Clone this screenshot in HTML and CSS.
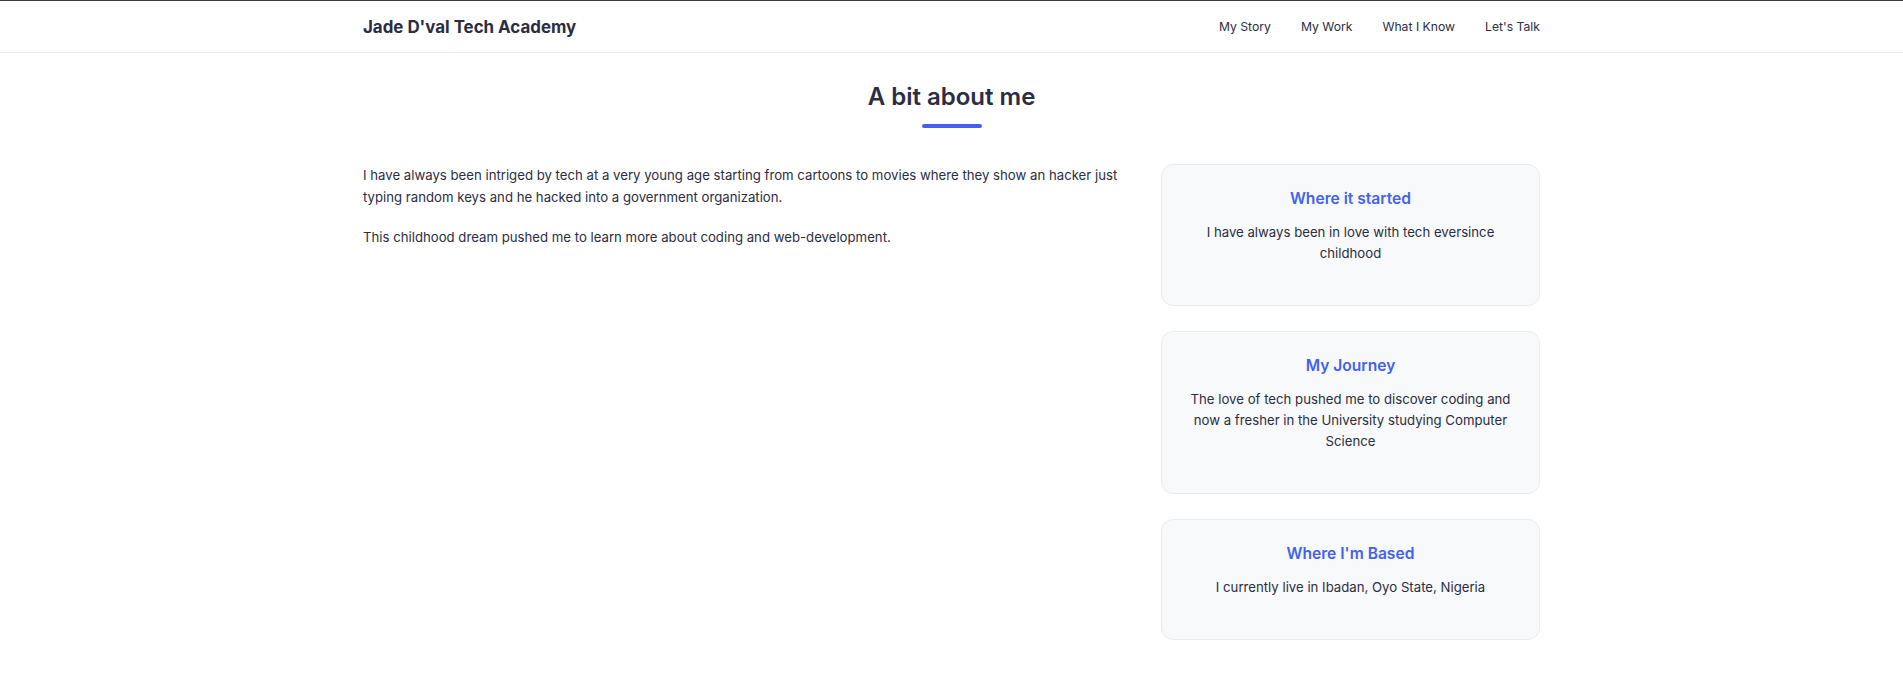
FILE: index.html
```html
<!DOCTYPE html>
<html lang="en">
<head>
<meta charset="utf-8">
<title>Jade D'val Tech Academy</title>
<link rel="stylesheet" href="styles.css">
</head>
<body>
<header class="site-header">
  <div class="container header-inner">
    <a class="logo" href="#">Jade D'val Tech Academy</a>
    <nav class="nav">
      <a href="#">My Story</a>
      <a href="#">My Work</a>
      <a href="#">What I Know</a>
      <a href="#">Let's Talk</a>
    </nav>
  </div>
</header>
<main class="container about">
  <h1 class="section-title">A bit about me</h1>
  <div class="title-bar"></div>
  <div class="about-grid">
    <div class="about-text">
      <p>I have always been intriged by tech at a very young age starting from cartoons to movies where they show an hacker just typing random keys and he hacked into a government organization.</p>
      <p>This childhood dream pushed me to learn more about coding and web-development.</p>
    </div>
    <div class="cards">
      <div class="card">
        <h3>Where it started</h3>
        <p>I have always been in love with tech eversince childhood</p>
      </div>
      <div class="card">
        <h3>My Journey</h3>
        <p>The love of tech pushed me to discover coding and now a fresher in the University studying Computer Science</p>
      </div>
      <div class="card">
        <h3>Where I'm Based</h3>
        <p>I currently live in Ibadan, Oyo State, Nigeria</p>
      </div>
    </div>
  </div>
</main>
</body>
</html>
```
FILE: styles.css
```css
* { box-sizing: border-box; }
body {
  margin: 0;
  font-family: Inter, "Noto Sans", sans-serif;
  color: #2b2d42;
  background: #fff;
  border-top: 1px solid #373c44;
}
.container {
  width: 1177px;
  margin: 0 auto;
}
.site-header {
  border-bottom: 1px solid #e9ecef;
}
.header-inner {
  height: 51px;
  display: flex;
  align-items: center;
  justify-content: space-between;
}
.logo {
  font-size: 16.9px;
  font-weight: 700;
  color: #2b2d42;
  text-decoration: none;
}
.nav {
  display: flex;
  gap: 30px;
}
.nav a {
  font-size: 12.2px;
  font-weight: 400;
  color: #2b2d42;
  text-decoration: none;
}
.about {
  padding-top: 29px;
}
.section-title {
  margin: 0;
  text-align: center;
  font-size: 24px;
  font-weight: 600;
  line-height: 29px;
}
.title-bar {
  width: 60px;
  height: 4px;
  border-radius: 2px;
  background: #4361ee;
  margin: 13px auto 0;
}
.about-grid {
  margin-top: 36px;
  display: grid;
  grid-template-columns: 1fr 379px;
  gap: 32px;
  align-items: start;
}
.about-text p {
  margin: 0 0 19px;
  font-size: 13.2px;
  line-height: 21.6px;
}
.about-text p:first-child { margin-top: 1px; }
.cards {
  display: flex;
  flex-direction: column;
  gap: 25px;
}
.card {
  background: #f8f9fa;
  border: 1px solid #e9ecef;
  border-radius: 12px;
  padding: 24px 24px 24px;
  text-align: center;
}
.card h3 {
  margin: 0 0 13px;
  font-size: 15.6px;
  font-weight: 600;
  line-height: 20px;
  color: #4361ee;
}
.card p {
  margin: 0 0 17px;
  font-size: 13.2px;
  line-height: 21px;
}
```
